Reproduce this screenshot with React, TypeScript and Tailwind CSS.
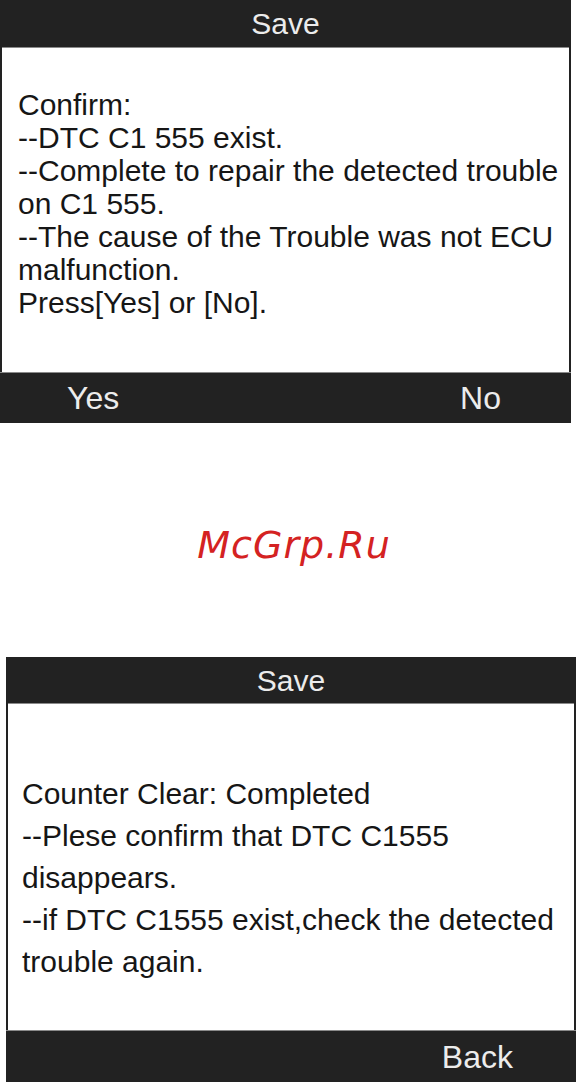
export default function App() {
  const font = { fontFamily: '"Liberation Sans", Arial, sans-serif' };

  return (
    <div className="w-[576px] h-[1082px] overflow-hidden bg-white" style={font}>
      {/* first dialog */}
      <div className="w-[571px] bg-[#222222] flex flex-col">
        <div className="h-[47px] flex items-center justify-center text-[30px] text-[#ececec]">
          Save
        </div>
        <div className="mx-[2px] h-[325px] bg-white border-t border-[#8a8a8a] pl-[16px] pt-[40px] text-[30px] leading-[33px] text-[#161616]">
          <div>Confirm:</div>
          <div>--DTC C1 555 exist.</div>
          <div>--Complete to repair the detected trouble</div>
          <div>on C1 555.</div>
          <div>--The cause of the Trouble was not ECU</div>
          <div>malfunction.</div>
          <div>Press[Yes] or [No].</div>
        </div>
        <div className="h-[51px] border-t border-[#8a8a8a] flex items-center justify-between pl-[67px] pr-[70px] text-[32px] text-[#ececec]">
          <span>Yes</span>
          <span>No</span>
        </div>
      </div>

      {/* watermark */}
      <div className="h-[234px] flex items-center justify-center pt-[10px]">
        <span
          className="italic text-[38px] text-[#d42222] tracking-[1px] pl-[12px]"
          style={{ fontFamily: '"DejaVu Sans", Verdana, sans-serif' }}
        >
          McGrp.Ru
        </span>
      </div>

      {/* second dialog */}
      <div className="ml-[6px] w-[570px] bg-[#222222] flex flex-col">
        <div className="h-[46px] flex items-center justify-center text-[30px] text-[#ececec]">
          Save
        </div>
        <div className="mx-[2px] h-[327px] bg-white border-t border-[#8a8a8a] pl-[14px] pt-[69px] text-[30px] leading-[42px] text-[#161616]">
          <div>Counter Clear: Completed</div>
          <div>--Plese confirm that DTC C1555</div>
          <div>disappears.</div>
          <div>--if DTC C1555 exist,check the detected</div>
          <div>trouble again.</div>
        </div>
        <div className="h-[52px] border-t border-[#8a8a8a] flex items-center justify-end pr-[63px] text-[32px] text-[#ececec]">
          <span>Back</span>
        </div>
      </div>
    </div>
  );
}
